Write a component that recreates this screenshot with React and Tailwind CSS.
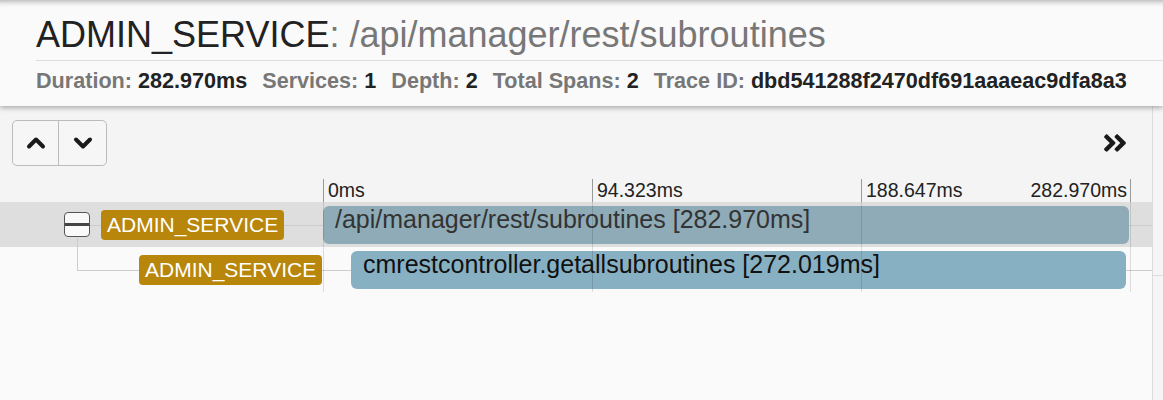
import { FaAngleDoubleRight } from "react-icons/fa";

const TOTAL = 282.97;
const SCALE = 806; // px for the full trace duration

const spans = [
  {
    id: "root",
    service: "ADMIN_SERVICE",
    name: "/api/manager/rest/subroutines",
    start: 0,
    duration: 282.97,
    rowClass: "bg-[#dedede]",
    indent: "pl-[64px]",
    barClass: "bg-[#8eabb7] text-[#333]",
    lineClass: "left-[90px]",
    hasChildren: true,
  },
  {
    id: "child",
    service: "ADMIN_SERVICE",
    name: "cmrestcontroller.getallsubroutines",
    start: 9.83,
    duration: 272.019,
    rowClass: "bg-[#fafafa]",
    indent: "pl-[139px]",
    barClass: "bg-[#87b0c3] text-[#111]",
    lineClass: "left-[77px]",
    hasChildren: false,
  },
];

const stats = [
  ["Duration:", "282.970ms"],
  ["Services:", "1"],
  ["Depth:", "2"],
  ["Total Spans:", "2"],
  ["Trace ID:", "dbd541288f2470df691aaaeac9dfa8a3"],
];

// thick chevron, pointing up or down
function Chevron({ down = false }) {
  return (
    <svg width="20" height="14" viewBox="0 0 20 14" fill="none">
      <polyline
        points={down ? "3,3.5 10,10.5 17,3.5" : "3,10.5 10,3.5 17,10.5"}
        stroke="currentColor"
        strokeWidth="4"
        strokeLinecap="round"
        strokeLinejoin="round"
      />
    </svg>
  );
}

function Header() {
  return (
    <header className="relative z-10 bg-[#fafafa] pt-[13px] pb-[12px] pl-[36px] shadow-[inset_0_7px_6px_-6px_rgba(0,0,0,0.35),0_2px_5px_rgba(0,0,0,0.3)]">
      <h1 className="text-[36px] leading-[43px] text-[#222] whitespace-nowrap">
        ADMIN_SERVICE<span className="text-[#777]">: /api/manager/rest/subroutines</span>
      </h1>
      <div className="mt-[4px] border-t border-[#dddddd]" />
      <div className="mt-[7px] flex gap-[15px] text-[21.6px] leading-[26px] font-bold whitespace-nowrap">
        {stats.map(([label, value]) => (
          <span key={label}>
            <span className="text-[#777]">{label}</span> <span className="text-[#222]">{value}</span>
          </span>
        ))}
      </div>
    </header>
  );
}

function Controls() {
  return (
    <div className="flex items-center justify-between pl-[12px] pr-[23px] pt-[14px]">
      <div className="flex h-[46px] rounded-[5px] border border-[#bbb] bg-[#f6f6f6]">
        <button className="flex w-[46px] items-center justify-center border-r border-[#bbb] text-[#1a1a1a]">
          <Chevron />
        </button>
        <button className="flex w-[47px] items-center justify-center text-[#1a1a1a]">
          <Chevron down />
        </button>
      </div>
      <button className="text-[#1a1a1a]">
        <FaAngleDoubleRight size={28} />
      </button>
    </div>
  );
}

function TimeAxis() {
  return (
    <div className="mt-[13px] flex h-[23px] text-[19.5px] leading-[23px] text-[#222]">
      <div className="w-[323px]" />
      <div className="w-[269px] border-l border-[#999] pl-[4px]">0ms</div>
      <div className="w-[269px] border-l border-[#999] pl-[4px]">94.323ms</div>
      <div className="flex w-[270px] justify-between border-x border-[#999] pl-[4px] pr-[3px]">
        <span>188.647ms</span>
        <span>282.970ms</span>
      </div>
    </div>
  );
}

function SpanRow({ span }) {
  const left = (span.start / TOTAL) * SCALE;
  const width = (span.duration / TOTAL) * SCALE;
  return (
    <div className={`relative flex h-[45px] ${span.rowClass}`}>
      <div className={`absolute right-0 top-[23px] h-px bg-[#cccccc] ${span.lineClass}`} />
      {!span.hasChildren && (
        <div className="absolute left-[77px] top-[-9px] h-[33px] w-px bg-[#cccccc]" />
      )}
      <div className={`relative flex w-[323px] items-center ${span.indent}`}>
        {span.hasChildren && (
          <div className="mr-[11px] flex h-[25px] w-[26px] items-center rounded-[4px] border-[1.5px] border-[#555] bg-[#f9f9f9]">
            <div className="h-[3px] w-full bg-[#444]" />
          </div>
        )}
        <span className="h-[30px] rounded-[4px] bg-[#b8860b] px-[6px] text-[21px] leading-[30px] text-white whitespace-nowrap">
          {span.service}
        </span>
      </div>
      <div className="relative w-[807px]">
        <div
          className={`absolute top-[4px] h-[38px] rounded-[6px] pl-[12px] pt-[1px] text-[25px] leading-[25px] whitespace-nowrap ${span.barClass}`}
          style={{ left: `${left}px`, width: `${width}px` }}
        >
          {span.name} [{span.duration.toFixed(3)}ms]
        </div>
      </div>
    </div>
  );
}

export default function App() {
  return (
    <div
      className="flex h-[400px] w-[1163px] flex-col overflow-hidden bg-[#fafafa]"
      style={{ fontFamily: '"Liberation Sans", Arial, sans-serif' }}
    >
      <Header />
      <div className="flex flex-1">
        <main className="flex w-[1152px] flex-col">
          <div className="bg-[#f4f4f4]">
            <Controls />
            <TimeAxis />
          </div>
          <div className="relative">
            {spans.map((span) => (
              <SpanRow key={span.id} span={span} />
            ))}
            {/* tick guides over the rows */}
            <div className="pointer-events-none absolute left-[323px] top-0 h-full w-px bg-black/[0.12]" />
            <div className="pointer-events-none absolute left-[592px] top-0 h-full w-px bg-black/[0.12]" />
            <div className="pointer-events-none absolute left-[861px] top-0 h-full w-px bg-black/[0.12]" />
            <div className="pointer-events-none absolute left-[1130px] top-0 h-full w-px bg-black/[0.12]" />
          </div>
        </main>
        <aside className="w-[11px] border-l border-[#dddddd] bg-[#f5f5f5]">
          <div className="h-[170px] border-b border-[#dddddd]" />
        </aside>
      </div>
    </div>
  );
}
